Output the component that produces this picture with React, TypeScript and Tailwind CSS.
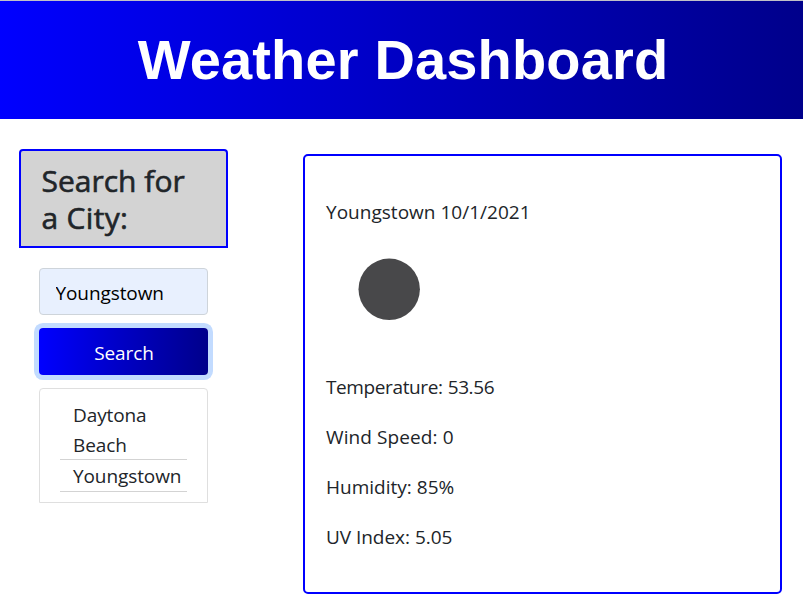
import React, { useState } from "react";

const history = [
  { name: "Daytona Beach", height: "h-[60px]" },
  { name: "Youngstown", height: "h-[31px]" },
];

const readings = [
  { label: "Temperature", value: "53.56", tracking: "tracking-[-0.38px]" },
  { label: "Wind Speed", value: "0", tracking: "tracking-[0.1px]" },
  { label: "Humidity", value: "85%", tracking: "tracking-[0px]" },
  { label: "UV Index", value: "5.05", tracking: "tracking-[-0.05px]" },
];

export default function App() {
  const [city, setCity] = useState("Youngstown");

  return (
    <div className="h-[612px] w-full overflow-hidden bg-white font-['Open_Sans','Noto_Sans',sans-serif] text-[19px] leading-[30px] text-[#212529]">
      <header className="h-[119px] border-t border-[#c0c0c8] bg-linear-to-r from-[#0000ff] to-[#00008b] pt-[25px] pl-[3px] text-center">
        <h1 className="font-['Liberation_Sans',Arial,sans-serif] text-[56px] leading-[67px] font-bold tracking-[0.15px] whitespace-nowrap text-white">
          Weather Dashboard
        </h1>
      </header>

      <main className="flex items-start">
        <aside className="mt-[30px] ml-[19px] w-[209px] shrink-0">
          <h2 className="h-[99px] rounded-t-[4px] border-2 border-[#0000ff] bg-[#d3d3d3] pt-[11px] pl-[20.5px] text-[30px] leading-[37px] font-medium [-webkit-text-stroke:0.6px_#212529]">
            Search for
            <br />
            <span className="tracking-[0.3px]">a City:</span>
          </h2>
          <div className="mx-5 mt-5">
            <input
              value={city}
              onChange={(e) => setCity(e.target.value)}
              className="block h-[47px] w-full rounded-[4px] border border-[#ced4da] bg-[#e8f0fe] px-[15.5px] pt-[3px] tracking-[-0.1px] text-black outline-none"
            />
            <button className="mt-[13px] block h-[47px] w-full rounded-[4px] bg-linear-to-r from-[#0000ff] to-[#00008b] pt-[3px] pl-px tracking-[-0.1px] text-white ring-[5px] ring-[#c2dbff]">
              Search
            </button>
            <ul className="mt-[13px] h-[115px] rounded-t-[4px] border border-[#dfdfdf] px-5 pt-[11px] tracking-[-0.1px]">
              {history.map((item) => (
                <li
                  key={item.name}
                  className={`mb-px border-b border-[#d3d3d3] pl-[13px] ${item.height}`}
                >
                  {item.name}
                </li>
              ))}
            </ul>
          </div>
        </aside>

        <section className="mt-[35px] ml-[75px] h-[440px] w-[479px] shrink-0 rounded-[5px] border-2 border-[#0000ff] pt-[41px] pl-[21px]">
          <p className="tracking-[0.02px]">Youngstown 10/1/2021</p>
          <svg className="mt-[12px] block" width="125" height="125" viewBox="0 0 125 125">
            <circle cx="63.2" cy="50.3" r="30.7" fill="#48484a" />
          </svg>
          <dl className="mt-[8px] flex flex-col gap-5">
            {readings.map((r) => (
              <div key={r.label} className={`flex gap-[5px] ${r.tracking}`}>
                <dt>{r.label}:</dt>
                <dd>{r.value}</dd>
              </div>
            ))}
          </dl>
        </section>
      </main>
    </div>
  );
}
